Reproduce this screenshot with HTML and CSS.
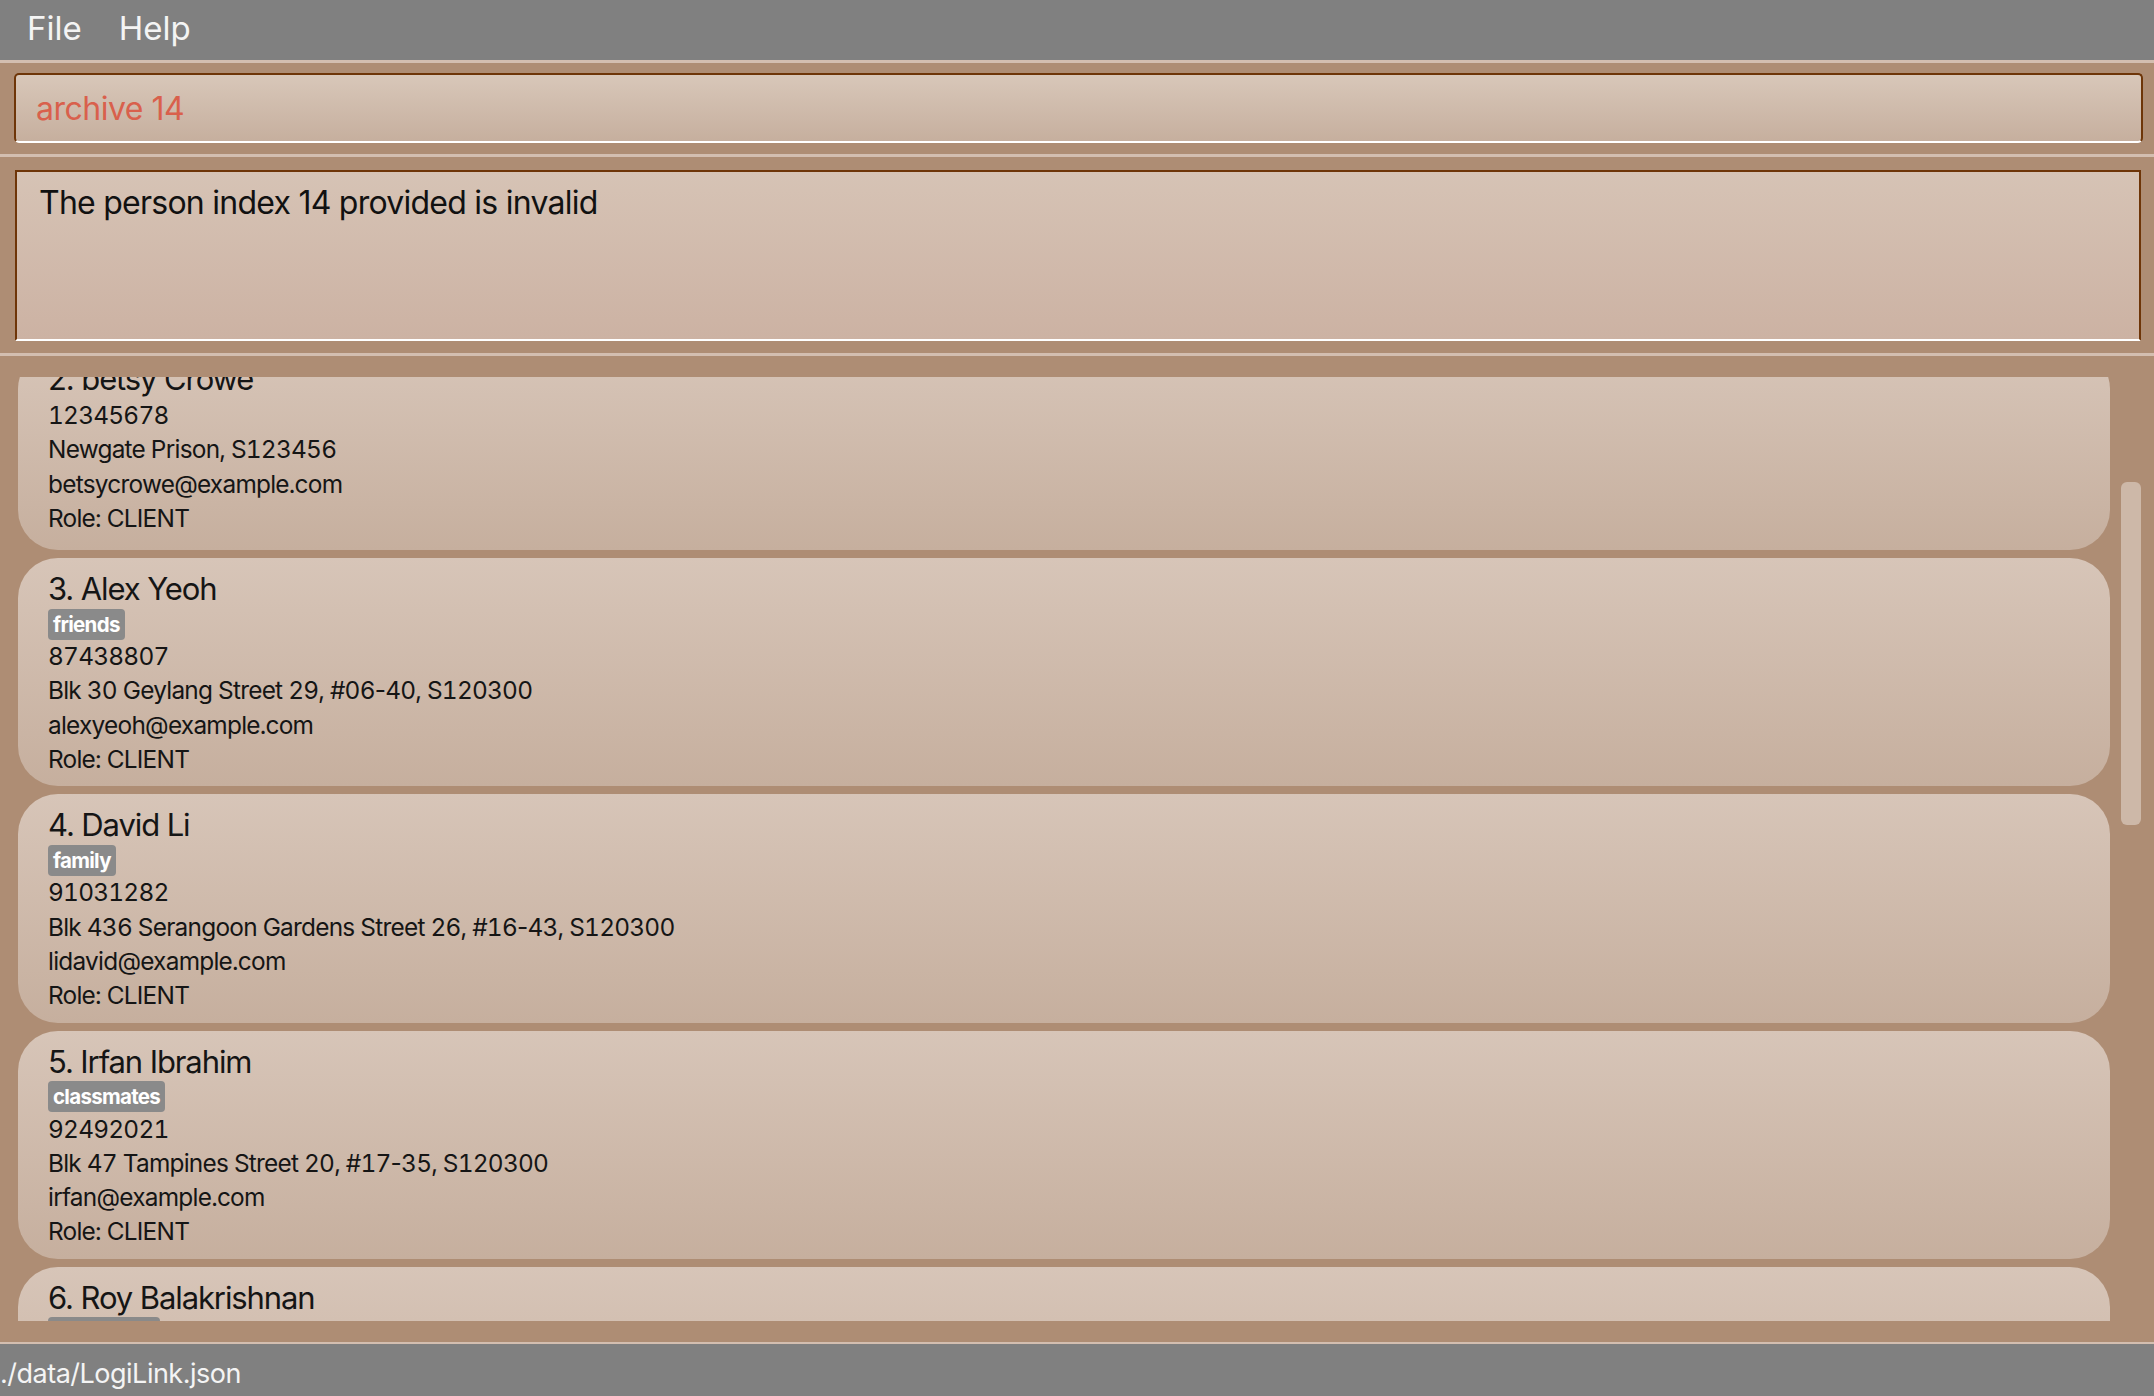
FILE: index.html
```html
<!DOCTYPE html>
<html>
<head>
<meta charset="utf-8">
<link rel="stylesheet" href="styles.css">
</head>
<body>
<div class="app">
  <div class="menubar">
    <span class="menu-item">File</span>
    <span class="menu-item">Help</span>
  </div>
  <div class="section section-command">
    <div class="command-box">archive 14</div>
  </div>
  <div class="section section-result">
    <div class="result-box">The person index 14 provided is invalid</div>
  </div>
  <div class="section section-list">
    <div class="list-viewport">
      <div class="list">
        <div class="card card-notags">
          <div class="name">2. betsy Crowe</div>
          <div class="line">12345678</div>
          <div class="line">Newgate Prison, S123456</div>
          <div class="line">betsycrowe@example.com</div>
          <div class="line">Role: CLIENT</div>
        </div>
        <div class="card">
          <div class="name">3. Alex Yeoh</div>
          <div class="tags"><span class="tag">friends</span></div>
          <div class="line">87438807</div>
          <div class="line">Blk 30 Geylang Street 29, #06<span class="hy">-</span>40, S120300</div>
          <div class="line">alexyeoh@example.com</div>
          <div class="line">Role: CLIENT</div>
        </div>
        <div class="card">
          <div class="name">4. David Li</div>
          <div class="tags"><span class="tag">family</span></div>
          <div class="line">91031282</div>
          <div class="line">Blk 436 Serangoon Gardens Street 26, #16<span class="hy">-</span>43, S120300</div>
          <div class="line">lidavid@example.com</div>
          <div class="line">Role: CLIENT</div>
        </div>
        <div class="card">
          <div class="name">5. Irfan Ibrahim</div>
          <div class="tags"><span class="tag">classmates</span></div>
          <div class="line">92492021</div>
          <div class="line">Blk 47 Tampines Street 20, #17<span class="hy">-</span>35, S120300</div>
          <div class="line">irfan@example.com</div>
          <div class="line">Role: CLIENT</div>
        </div>
        <div class="card">
          <div class="name">6. Roy Balakrishnan</div>
          <div class="tags"><span class="tag">colleagues</span></div>
          <div class="line">92624417</div>
          <div class="line">Blk 45 Aljunied Street 85, #11<span class="hy">-</span>31, S120300</div>
          <div class="line">royb@example.com</div>
          <div class="line">Role: CLIENT</div>
        </div>
      </div>
      <div class="scrollbar"><div class="thumb"></div></div>
    </div>
  </div>
  <div class="statusbar">./data/LogiLink.json</div>
</div>
</body>
</html>
```

FILE: styles.css
```css
* { box-sizing: border-box; }
html, body { margin: 0; padding: 0; }
body {
  font-family: Inter, "Noto Sans", sans-serif;
  background: #ae8d74;
  width: 2154px;
  height: 1396px;
  overflow: hidden;
}
.app {
  display: flex;
  flex-direction: column;
  height: 1396px;
}
.menubar {
  height: 60px;
  background: #808080;
  display: flex;
  align-items: center;
  padding: 0 0 5px 27px;
  gap: 37px;
}
.menu-item {
  color: #f4f4f4;
  font-size: 33px;
  letter-spacing: 0;
}
.section {
  border-top: 3px solid #d3beb0;
  background: #ae8d74;
}
.section-command {
  padding: 10px 11px 11px 14px;
}
.command-box {
  height: 70px;
  border: 2px solid #6e3508;
  border-bottom: 2px solid #ffffff;
  border-radius: 5px;
  background: linear-gradient(#d8c7b9, #c6af9e);
  color: #d9604c;
  font-size: 32px;
  letter-spacing: -0.5px;
  display: flex;
  align-items: center;
  padding-left: 20px;
}
.section-result {
  padding: 13px 13px 12px 15px;
}
.result-box {
  height: 171px;
  border: 2px solid #6e3508;
  border-bottom: 2px solid #ffffff;
  background: linear-gradient(#d6c3b5, #ccb2a3);
  color: #111;
  font-size: 32px;
  letter-spacing: -0.75px;
  line-height: 40px;
  padding: 11px 0 0 22px;
}
.section-list {
  flex: 1;
  padding: 21px 0 21px 18px;
  min-height: 0;
  display: flex;
}
.list-viewport {
  flex: 1;
  display: flex;
  overflow: hidden;
  gap: 11px;
}
.list {
  flex: 0 0 2092px;
  display: flex;
  flex-direction: column;
  gap: 8px;
  margin-top: -28px;
}
.card {
  border-radius: 40px;
  background: linear-gradient(#d7c5b8, #c6af9e);
  padding: 11px 0 10px 30px;
  color: #151515;
  flex: 0 0 auto;
}
.card-notags {
  padding-top: 10px;
  padding-bottom: 15px;
}
.card-notags .name {
  margin-bottom: -1px;
}
.name {
  font-size: 31px;
  line-height: 40px;
  letter-spacing: -1.1px;
}
.tags {
  height: 30px;
  display: flex;
  align-items: center;
}
.tag {
  background: #8a8a8a;
  color: #ffffff;
  font-weight: 700;
  font-size: 20.5px;
  letter-spacing: -0.7px;
  border-radius: 4px;
  padding: 0 5px;
  height: 31px;
  line-height: 31px;
}
.line {
  font-size: 24.4px;
  line-height: 34.3px;
  letter-spacing: -0.75px;
  font-feature-settings: "tnum";
}
.hy {
  font-feature-settings: "tnum" 0;
}
.scrollbar {
  width: 20px;
  position: relative;
}
.thumb {
  position: absolute;
  top: 105px;
  left: 0;
  width: 20px;
  height: 343px;
  border-radius: 6px;
  background: #cdb8a8;
}
.statusbar {
  border-top: 2px solid #d3beb0;
  height: 54px;
  background: #808080;
  color: #f4f4f4;
  font-size: 27px;
  letter-spacing: -0.5px;
  display: flex;
  align-items: center;
  padding-top: 6px;
}
```
